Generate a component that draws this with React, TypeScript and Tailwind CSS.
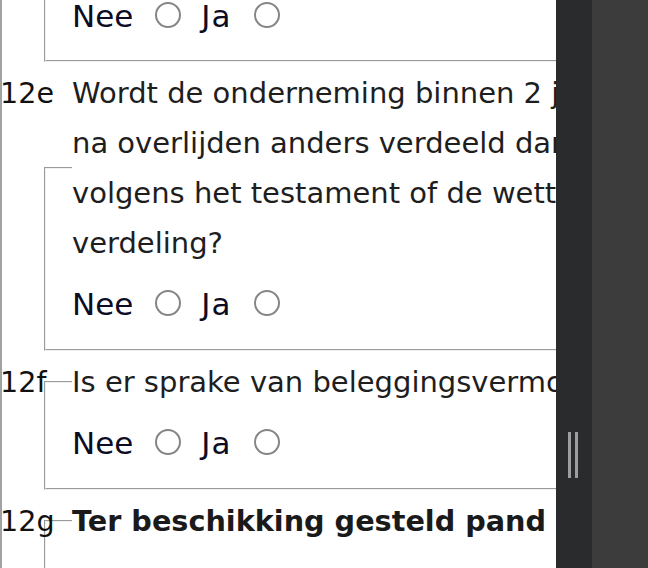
import React from "react";

function Radio({ className }: { className: string }) {
  return (
    <span
      className={
        "inline-block w-[26px] h-[26px] rounded-full border-2 border-[#858585] bg-white mb-[3px] shrink-0 " +
        className
      }
    />
  );
}

function YesNo() {
  return (
    <div className="flex items-center h-[50px] text-[31px] text-[#0c0c24] whitespace-nowrap">
      <span>Nee</span>
      <Radio className="ml-[22px]" />
      <span className="ml-[20px] tracking-[1px]">Ja</span>
      <Radio className="ml-[23px]" />
    </div>
  );
}

function Question({
  num,
  legend,
  children,
  bold,
}: {
  num: string;
  legend: React.ReactNode;
  children?: React.ReactNode;
  bold?: boolean;
}) {
  return (
    <div className="relative pl-[42px] mt-[6px]">
      <fieldset className="w-[700px] border-2 [border-style:groove] border-[#efefef] pl-[26px] pt-[11px] pb-[20px]">
        <legend
          className={
            "w-[575px] leading-[50px] whitespace-nowrap " +
            (bold ? "text-[28.7px] font-bold text-[#1a1a1a]" : "text-[29px] text-[#1e1e1e]")
          }
        >
          {legend}
        </legend>
        {children}
      </fieldset>
      <span className="absolute left-[-2px] top-0 leading-[50px] text-[28.6px] text-[#111111]">{num}</span>
    </div>
  );
}

export default function App() {
  return (
    <div className="flex w-[648px] h-[568px] overflow-hidden font-['DejaVu_Sans',sans-serif] text-[28.6px]">
      <div className="w-[556px] h-[568px] shrink-0 bg-white overflow-hidden">
        <div className="w-[760px] border-l-2 border-[#a2a2a2] -mt-[22px] pb-[200px]">
          <div className="pl-[42px]">
            <fieldset className="w-[700px] border-2 [border-style:groove] border-[#efefef] pl-[26px] pt-[11px] pb-[19px]">
              <YesNo />
            </fieldset>
          </div>
          <Question
            num="12e"
            legend={
              <>
                Wordt de onderneming binnen 2 jaar
                <br />
                na overlijden anders verdeeld dan
                <br />
                volgens het testament of de wettelijke
                <br />
                verdeling?
              </>
            }
          >
            <YesNo />
          </Question>
          <Question num="12f" legend="Is er sprake van beleggingsvermogen?">
            <YesNo />
          </Question>
          <Question num="12g" legend="Ter beschikking gesteld pand" bold>
            <div className="h-[120px]" />
          </Question>
        </div>
      </div>
      <div className="w-[36px] h-[568px] shrink-0 bg-[#2a2b2d]">
        <div className="flex gap-[4px] pl-[12px] mt-[432px]">
          <div className="w-[3px] h-[46px] bg-[#9e9e9e]" />
          <div className="w-[3px] h-[46px] bg-[#9e9e9e]" />
        </div>
      </div>
      <div className="flex-1 h-[568px] bg-[#3c3c3c]" />
    </div>
  );
}
